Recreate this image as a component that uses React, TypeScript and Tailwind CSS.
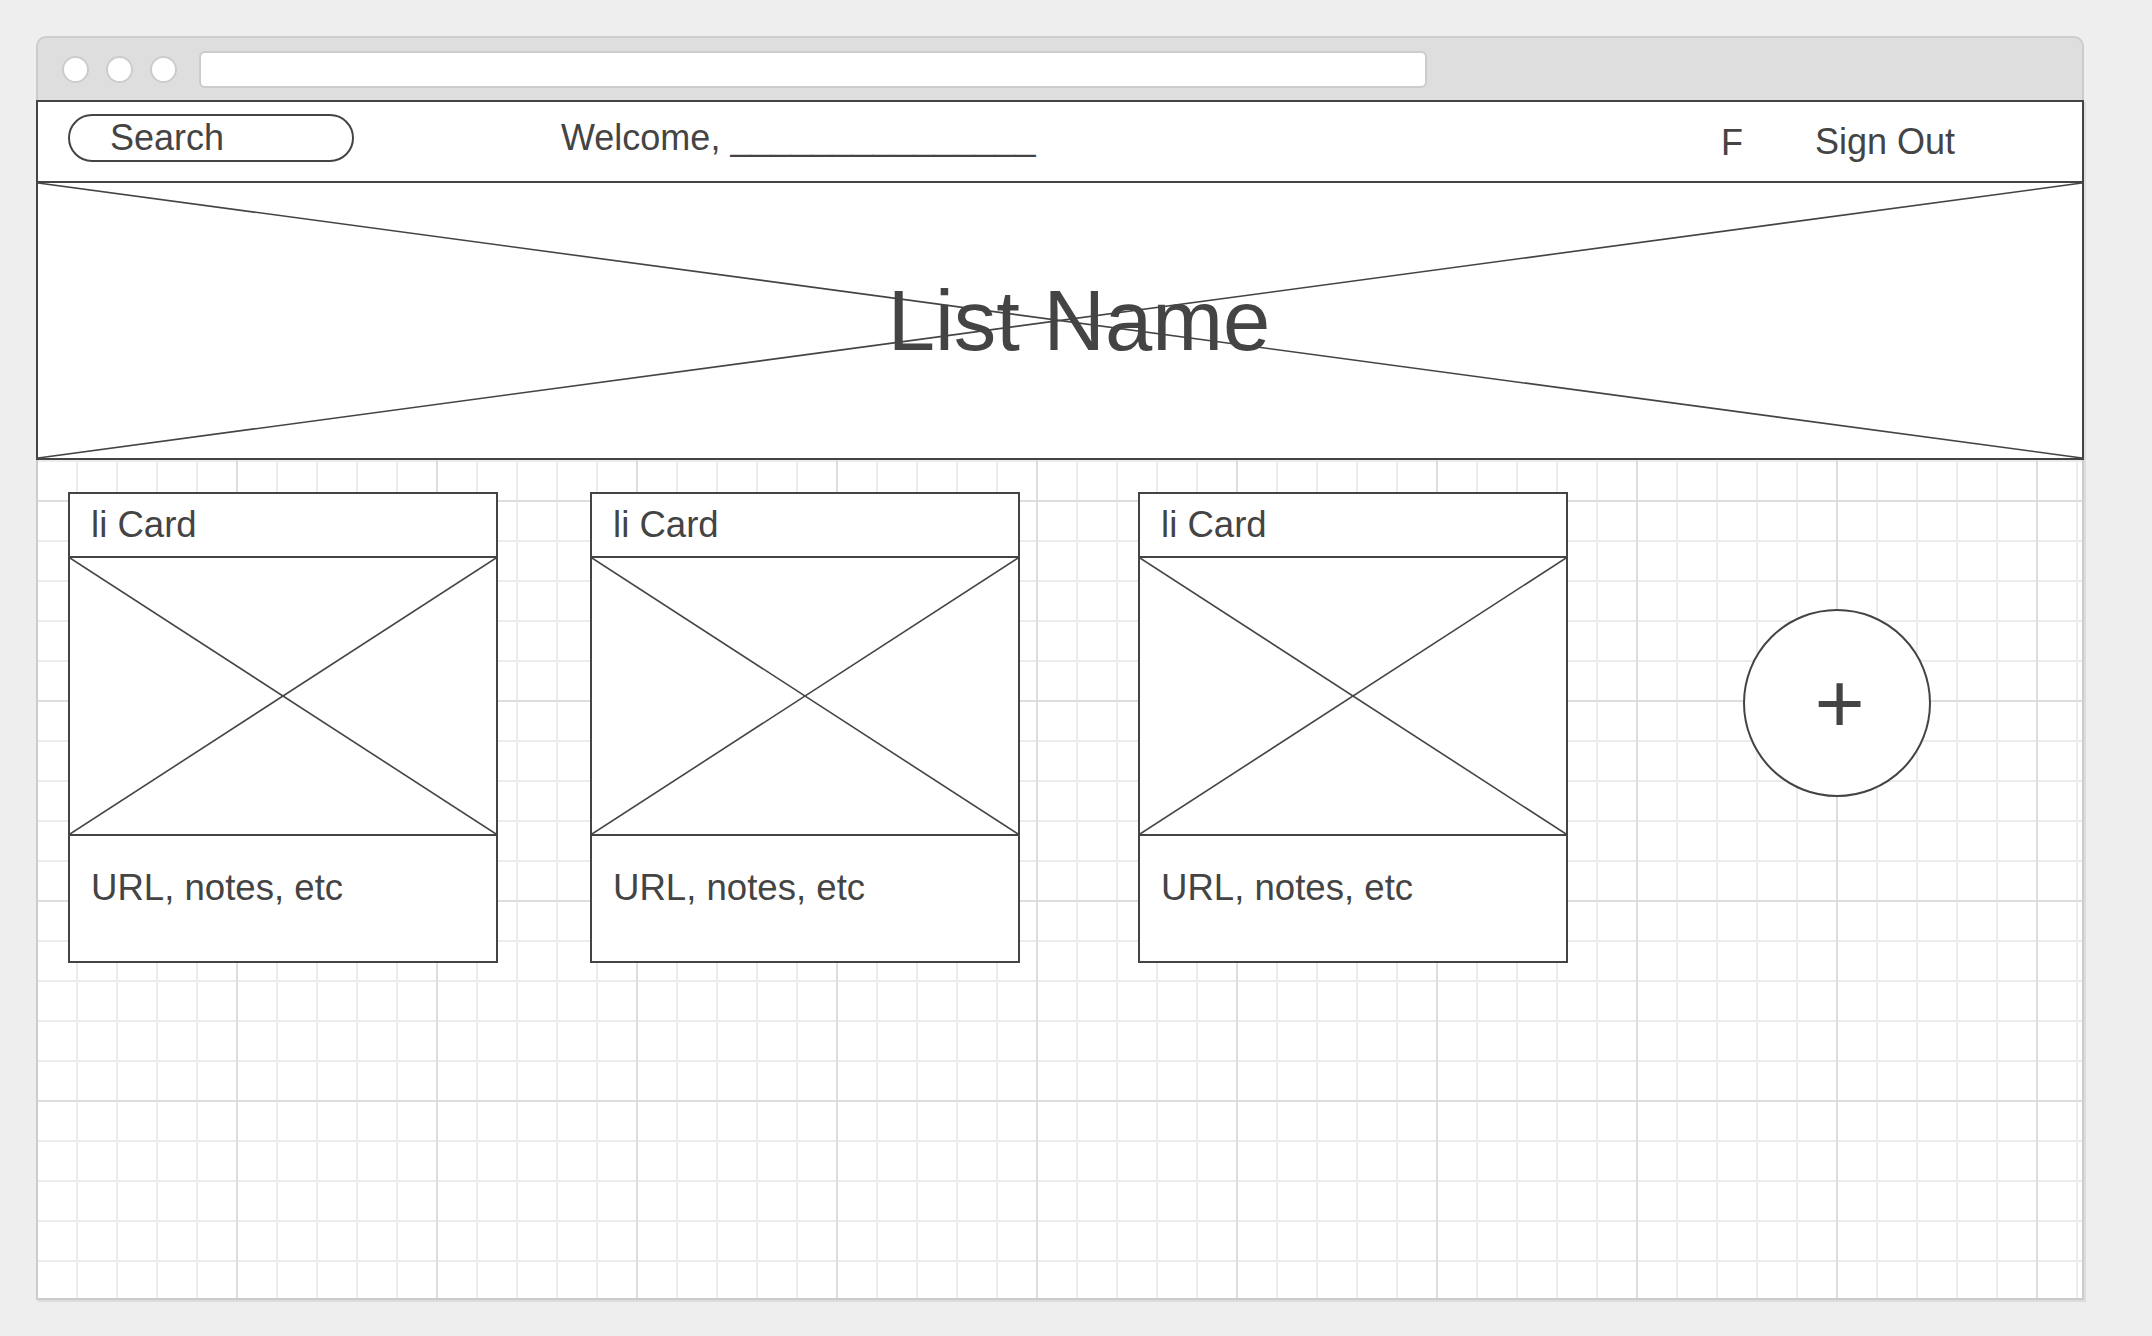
import React from "react";

function XBox() {
  return (
    <svg
      className="absolute inset-0 h-full w-full"
      viewBox="0 0 100 100"
      preserveAspectRatio="none"
    >
      <line x1="0" y1="0" x2="100" y2="100" stroke="#444444" strokeWidth="1.6" vectorEffect="non-scaling-stroke" />
      <line x1="100" y1="0" x2="0" y2="100" stroke="#444444" strokeWidth="1.6" vectorEffect="non-scaling-stroke" />
    </svg>
  );
}

function Card({ className = "" }: { className?: string }) {
  return (
    <div className={`w-[430px] shrink-0 border-2 border-[#444444] bg-white ${className}`}>
      <div className="flex h-[64px] items-center border-b-2 border-[#444444] pl-[21px] text-[36.6px] leading-[40px] text-[#444444]">
        li Card
      </div>
      <div className="relative h-[278px] border-b-2 border-[#444444]">
        <XBox />
      </div>
      <div className="h-[125px] pl-[21px] pt-[32px] text-[36.6px] leading-[40px] text-[#444444]">
        URL, notes, etc
      </div>
    </div>
  );
}

export default function App() {
  return (
    <div className="min-h-screen w-full bg-[#eeeeee] pl-[36px] pt-[36px] font-['Liberation_Sans',Arial,sans-serif]">
      <div className="w-[2048px]">
        {/* title bar */}
        <div className="flex h-[64px] items-center rounded-t-[10px] border-x-2 border-t-2 border-[#cccccc] bg-[#dedede] pl-[24px]">
          <div className="h-[27px] w-[27px] rounded-full border-2 border-[#cccccc] bg-white" />
          <div className="ml-[17px] h-[27px] w-[27px] rounded-full border-2 border-[#cccccc] bg-white" />
          <div className="ml-[17px] h-[27px] w-[27px] rounded-full border-2 border-[#cccccc] bg-white" />
          <div className="ml-[22px] h-[37px] w-[1228px] rounded-[6px] border-2 border-[#cccccc] bg-white" />
        </div>

        {/* content */}
        <div className="h-[1200px] bg-white bg-origin-border [background-image:linear-gradient(to_right,#dddddd_2px,transparent_2px),linear-gradient(to_bottom,#dddddd_2px,transparent_2px),linear-gradient(to_right,#ececec_2px,transparent_2px),linear-gradient(to_bottom,#ececec_2px,transparent_2px)] [background-size:200px_200px,200px_200px,40px_40px,40px_40px] shadow-[inset_2px_0_0_#cccccc,inset_-2px_0_0_#cccccc,inset_0_-2px_0_#cccccc,2px_2px_0_#dddddd]">
          {/* nav */}
          <div className="flex h-[83px] items-start border-2 border-[#444444] bg-white text-[#444444]">
            <div className="ml-[30px] mt-[12px] flex h-[48px] w-[286px] items-center rounded-full border-2 border-[#444444] pl-[40px] text-[36px] leading-[40px]">
              Search
            </div>
            <div className="ml-[207px] mt-[16px] whitespace-pre text-[36px] leading-[40px]">
              {"Welcome, "}
              <span className="text-[36.6px]">_______________</span>
            </div>
            <div className="flex-1" />
            <div className="mt-[21px] text-[36px] leading-[40px]">F</div>
            <div className="ml-[72px] mr-[127px] mt-[20px] text-[36px] leading-[40px]">Sign Out</div>
          </div>

          {/* banner */}
          <div className="relative flex h-[277px] items-center justify-center border-x-2 border-b-2 border-[#444444] bg-white">
            <XBox />
            <div className="relative ml-[38px] text-[85px] leading-none text-[#444444]">List Name</div>
          </div>

          {/* cards */}
          <div className="flex items-start pl-[32px] pt-[32px]">
            <Card />
            <Card className="ml-[92px]" />
            <Card className="ml-[118px]" />
            <div className="ml-[175px] mt-[117px] flex h-[188px] w-[188px] shrink-0 items-center justify-center rounded-full border-2 border-[#444444] bg-white pl-[5px] text-[86px] leading-none text-[#444444]">
              +
            </div>
          </div>
        </div>
      </div>
    </div>
  );
}
